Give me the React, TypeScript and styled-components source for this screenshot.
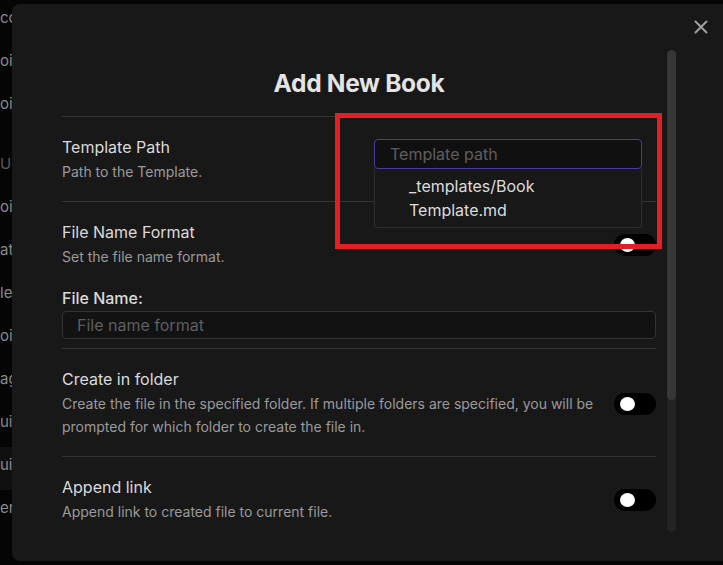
import React from 'react';
import styled, {createGlobalStyle} from 'styled-components';

const GlobalStyle = createGlobalStyle`
    html, body {
        margin: 0;
        padding: 0;
        background: #050505;
        font-family: Inter, "Noto Sans", sans-serif;
        overflow: hidden;
    }
`;

const sideItems = [
    {text: 'co'},
    {text: 'oi'},
    {text: 'oi'},
    {text: 'UC', heading: true},
    {text: 'oi'},
    {text: 'at'},
    {text: 'le'},
    {text: 'oi'},
    {text: 'ag'},
    {text: 'ui'},
    {text: 'ui', active: true},
    {text: 'er'},
];

type SettingProps = {
    name: string;
    desc: string;
    compact?: boolean;
    children?: React.ReactNode;
};

const Setting = ({name, desc, compact, children}: SettingProps) => (
    <SettingRow compact={compact}>
        <SettingInfo>
            <SettingName>{name}</SettingName>
            <SettingDesc>{desc}</SettingDesc>
        </SettingInfo>
        {children}
    </SettingRow>
);

const Toggle = () => (
    <ToggleTrack>
        <ToggleKnob/>
    </ToggleTrack>
);

const App = () => (
    <Page>
        <GlobalStyle/>

        <Sidebar>
            {sideItems.map((item, i) => (
                <SideItem key={i} heading={item.heading} active={item.active}>{item.text}</SideItem>
            ))}
        </Sidebar>

        <Modal>
            <CloseButton>
                <svg width="14" height="14" viewBox="0 0 14 14">
                    <path d="M1.5 1.5 L12.5 12.5 M12.5 1.5 L1.5 12.5" stroke="#a0a0a0" strokeWidth="2" strokeLinecap="round"/>
                </svg>
            </CloseButton>

            <ScrollArea>
                <Content>
                    <Title>Add New Book</Title>

                    <Setting name="Template Path" desc="Path to the Template.">
                        <PathControl>
                            <PathInput placeholder="Template path"/>
                            <Suggestions>
                                <SuggestionItem>_templates/Book Template.md</SuggestionItem>
                            </Suggestions>
                        </PathControl>
                    </Setting>

                    <Setting name="File Name Format" desc="Set the file name format." compact>
                        <Toggle/>
                    </Setting>

                    <FieldBlock>
                        <FieldLabel>File Name:</FieldLabel>
                        <TextInput placeholder="File name format"/>
                    </FieldBlock>

                    <Setting
                        name="Create in folder"
                        desc="Create the file in the specified folder. If multiple folders are specified, you will be prompted for which folder to create the file in."
                    >
                        <Toggle/>
                    </Setting>

                    <Setting name="Append link" desc="Append link to created file to current file.">
                        <Toggle/>
                    </Setting>
                </Content>

                <ScrollTrack>
                    <ScrollThumb/>
                </ScrollTrack>
            </ScrollArea>
        </Modal>

        <Highlight/>
    </Page>
);

export default App;

const Page = styled.div`
    position: relative;
    width: 723px;
    height: 565px;
    overflow: hidden;
    background: #050505;
`;

const Sidebar = styled.div`
    display: flex;
    flex-direction: column;
`;

const SideItem: any = styled.div`
    height: 43px;
    line-height: 36px;
    margin-top: ${(props: any) => (props.heading ? '17px' : '0')};
    font-size: 15px;
    white-space: nowrap;
    color: ${(props: any) => (props.heading ? '#5a5a5a' : '#8a8a8a')};
    background: ${(props: any) => (props.active ? '#101010' : 'transparent')};
`;

const Modal = styled.div`
    position: absolute;
    left: 12px;
    top: 4px;
    width: 740px;
    height: 557px;
    box-sizing: border-box;
    padding: 46px 0 0 50px;
    background: #181818;
    border-radius: 8px;
`;

const CloseButton = styled.div`
    position: absolute;
    top: 16px;
    left: 682px;
    width: 14px;
    height: 14px;
    display: flex;
`;

const ScrollArea = styled.div`
    display: flex;
    gap: 11px;
    height: 482px;
`;

const Content = styled.div`
    width: 594px;
    padding-top: 18px;
    overflow: hidden;
`;

const Title = styled.h1`
    margin: 0 0 18px;
    font-size: 24.5px;
    line-height: 30px;
    font-weight: 700;
    letter-spacing: -0.3px;
    text-align: center;
    color: #e4e4e4;
`;

const SettingRow: any = styled.div`
    display: flex;
    align-items: center;
    justify-content: space-between;
    gap: 20px;
    border-top: 1px solid #333333;
    padding: ${(props: any) => (props.compact ? '20px 0 0' : '20px 0 18px')};
`;

const SettingInfo = styled.div`
    flex: 1;
    min-width: 0;
`;

const SettingName = styled.div`
    font-size: 16px;
    line-height: 20px;
    color: #dadada;
`;

const SettingDesc = styled.div`
    margin-top: 3px;
    font-size: 14px;
    line-height: 23px;
    color: #9a9a9a;
`;

const PathControl = styled.div`
    position: relative;
    align-self: flex-start;
    margin: 2px 14px 0 0;
`;

const PathInput = styled.input`
    display: block;
    width: 268px;
    height: 30px;
    box-sizing: border-box;
    padding: 0 15px;
    border: 1px solid #4a3a9a;
    border-radius: 4px;
    background: #101010;
    font-family: inherit;
    font-size: 16px;
    color: #dadada;
    outline: none;

    &::placeholder {
        color: #5e5e5e;
    }
`;

const Suggestions = styled.div`
    position: absolute;
    left: 0;
    top: 30px;
    width: 268px;
    box-sizing: border-box;
    padding: 5px 60px 5px 34px;
    background: #181818;
    border: 1px solid #2e2e2e;
    border-top: none;
    border-radius: 0 0 4px 4px;
    z-index: 2;
`;

const SuggestionItem = styled.div`
    font-size: 16px;
    line-height: 24px;
    color: #dcdcdc;
`;

const ToggleTrack = styled.div`
    flex-shrink: 0;
    position: relative;
    width: 42px;
    height: 22px;
    border-radius: 11px;
    background: #000000;
`;

const ToggleKnob = styled.div`
    position: absolute;
    left: 6px;
    top: 4px;
    width: 15px;
    height: 14px;
    border-radius: 50%;
    background: #ffffff;
`;

const FieldBlock = styled.div`
    padding: 20px 0 9px;
`;

const FieldLabel = styled.div`
    margin-bottom: 3px;
    font-size: 16px;
    line-height: 20px;
    font-weight: 500;
    color: #dadada;
`;

const TextInput = styled.input`
    display: block;
    width: 100%;
    height: 28px;
    box-sizing: border-box;
    padding: 0 14px;
    border: 1px solid #333333;
    border-radius: 4px;
    background: #121212;
    font-family: inherit;
    font-size: 16px;
    color: #dadada;
    outline: none;

    &::placeholder {
        color: #5e5e5e;
    }
`;

const ScrollTrack = styled.div`
    width: 9px;
    height: 100%;
    border-radius: 5px;
    background: #232323;
`;

const ScrollThumb = styled.div`
    width: 9px;
    height: 350px;
    border-radius: 5px;
    background: #363636;
`;

const Highlight = styled.div`
    position: absolute;
    left: 335px;
    top: 113px;
    width: 327px;
    height: 136px;
    box-sizing: border-box;
    border: 5px solid #e41e26;
    z-index: 3;
`;
